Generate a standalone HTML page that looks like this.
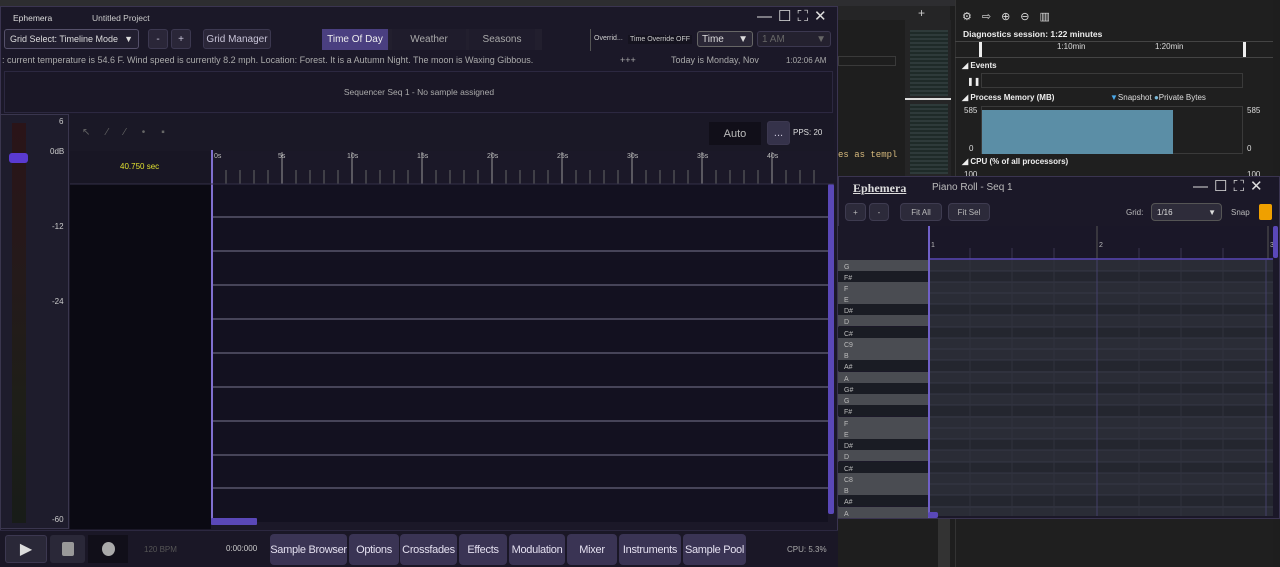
<!DOCTYPE html>
<html><head><style>
*{margin:0;padding:0;box-sizing:border-box}
body{width:1280px;height:567px;overflow:hidden;background:#1e1e1e;font-family:"Liberation Sans",sans-serif;position:relative;color:#bbb}
.a{position:absolute}
.btn{position:absolute;background:#2a2638;border:1px solid #3c3850;border-radius:3px;color:#c8c4d8;font-size:10px;display:flex;align-items:center;justify-content:center}
.tb{position:absolute;top:534px;height:31px;background:#3a3454;border-radius:4px;color:#e4e0f0;font-size:11px;letter-spacing:-0.3px;display:flex;align-items:center;justify-content:center;white-space:nowrap}
.pb{position:absolute;top:203px;height:18px;background:#2c2a3a;border:1px solid #3e3b50;border-radius:4px;color:#bbb;font-size:8px;display:flex;align-items:center;justify-content:center}
</style></head><body>
<div class="a" style="left:0;top:0;width:955px;height:6px;background:#2d2d30"></div>
<div class="a" style="left:838px;top:6px;width:112px;height:14px;background:#252526"></div>
<div class="a" style="left:838px;top:56px;width:58px;height:10px;border:1px solid #3a3a3a"></div>
<div class="a" style="left:838px;top:150px;font:9px 'Liberation Mono',monospace;color:#d7ba7d;white-space:nowrap">es as templ</div>
<div class="a" style="left:905px;top:20px;width:46px;height:156px;background:#252526"></div>
<div class="a" style="left:910px;top:30px;width:38px;height:66px;background:repeating-linear-gradient(#2e3a3a 0 2px,#1e2a28 2px 4px)"></div>
<div class="a" style="left:905px;top:98px;width:46px;height:2px;background:#ddd"></div>
<div class="a" style="left:910px;top:104px;width:38px;height:70px;background:repeating-linear-gradient(#2e3a3a 0 2px,#1e2a28 2px 4px)"></div>
<div class="a" style="left:918px;top:6px;color:#ccc;font-size:12px">+</div>
<!-- diag tools -->
<div class="a" style="left:955px;top:0;width:318px;height:567px;background:#1f1f1f;border-left:1px solid #333"></div>
<div class="a" style="left:962px;top:10px;color:#ddd;font-size:11px;letter-spacing:10px">⚙⇨⊕⊖▥</div>
<div class="a" style="left:963px;top:29px;color:#eee;font-size:8.5px;font-weight:bold">Diagnostics session: 1:22 minutes</div>
<div class="a" style="left:955px;top:41px;width:318px;height:17px;border-top:1px solid #444;border-bottom:1px solid #444"></div>
<div class="a" style="left:979px;top:42px;width:3px;height:15px;background:#eee"></div>
<div class="a" style="left:1243px;top:42px;width:3px;height:15px;background:#eee"></div>
<div class="a" style="left:1057px;top:42px;color:#ddd;font-size:8px">1:10min</div>
<div class="a" style="left:1155px;top:42px;color:#ddd;font-size:8px">1:20min</div>
<div class="a" style="left:962px;top:61px;color:#eee;font-size:8px;font-weight:bold">◢ Events</div>
<div class="a" style="left:967px;top:77px;color:#eee;font-size:8px">❚❚</div>
<div class="a" style="left:981px;top:73px;width:262px;height:15px;border:1px solid #3a3a3a"></div>
<div class="a" style="left:962px;top:93px;color:#eee;font-size:8px;font-weight:bold">◢ Process Memory (MB)</div>
<div class="a" style="left:1110px;top:93px;color:#ddd;font-size:8px"><span style="color:#4aa8e8">▼</span>Snapshot <span style="color:#7ab8d8">●</span>Private Bytes</div>
<div class="a" style="left:981px;top:106px;width:262px;height:48px;border:1px solid #3a3a3a"></div>
<div class="a" style="left:982px;top:110px;width:191px;height:44px;background:#5b8ea6"></div>
<div class="a" style="left:964px;top:106px;color:#ddd;font-size:8px">585</div>
<div class="a" style="left:969px;top:144px;color:#ddd;font-size:8px">0</div>
<div class="a" style="left:1247px;top:106px;color:#ddd;font-size:8px">585</div>
<div class="a" style="left:1247px;top:144px;color:#ddd;font-size:8px">0</div>
<div class="a" style="left:962px;top:157px;color:#eee;font-size:8px;font-weight:bold">◢ CPU (% of all processors)</div>
<div class="a" style="left:964px;top:170px;color:#ddd;font-size:8px">100</div>
<div class="a" style="left:1247px;top:170px;color:#ddd;font-size:8px">100</div>
<div class="a" style="left:938px;top:518px;width:12px;height:49px;background:#333"></div>

<!-- MAIN WINDOW -->
<div class="a" style="left:0;top:6px;width:838px;height:561px;background:#1b1828;border:1px solid #3a3450"></div>
<div class="a" style="left:13px;top:13px;font-size:8.5px;color:#ddd">Ephemera</div>
<div class="a" style="left:92px;top:13px;font-size:8.5px;color:#ccc">Untitled Project</div>
<div class="a" style="left:757px;top:7px;font-size:15px;color:#ddd;letter-spacing:6px">—☐⛶✕</div>
<div class="btn" style="left:4px;top:29px;width:135px;height:20px;justify-content:space-between;padding:0 5px;font-size:9px;color:#ddd;background:#221f30;border-color:#55506a"><span>Grid Select: Timeline Mode</span><span>▼</span></div>
<div class="btn" style="left:148px;top:29px;width:20px;height:20px">-</div>
<div class="btn" style="left:171px;top:29px;width:20px;height:20px">+</div>
<div class="btn" style="left:203px;top:29px;width:68px;height:20px">Grid Manager</div>
<div class="a" style="left:322px;top:29px;width:220px;height:21px;background:#221f2e"></div>
<div class="a" style="left:322px;top:29px;width:66px;height:21px;background:#4a3f80;color:#eee;font-size:10px;display:flex;align-items:center;justify-content:center">Time Of Day</div>
<div class="a" style="left:392px;top:29px;width:74px;height:21px;color:#aaa;font-size:10px;display:flex;align-items:center;justify-content:center;background:#1f1c2c">Weather</div>
<div class="a" style="left:469px;top:29px;width:66px;height:21px;color:#aaa;font-size:10px;display:flex;align-items:center;justify-content:center;background:#1f1c2c">Seasons</div>
<div class="a" style="left:590px;top:29px;width:1px;height:22px;background:#555"></div>
<div class="a" style="left:594px;top:35px;font-size:7px;color:#ccc">Overrid...</div>
<div class="a" style="left:628px;top:35px;font-size:7px;color:#ccc;background:#15131f;padding:1px 2px">Time Override OFF</div>
<div class="btn" style="left:697px;top:31px;width:56px;height:16px;justify-content:space-between;padding:0 4px;color:#ddd;background:#2a2736;border-color:#666"><span>Time</span><span>▼</span></div>
<div class="btn" style="left:757px;top:31px;width:74px;height:16px;justify-content:space-between;padding:0 4px;color:#666;background:#24212f"><span>1 AM</span><span>▼</span></div>
<div class="a" style="left:2px;top:55px;font-size:9px;color:#aaa;white-space:nowrap">: current temperature is 54.6 F. Wind speed is currently 8.2 mph. Location: Forest. It is a Autumn Night. The moon is Waxing Gibbous.</div>
<div class="a" style="left:620px;top:55px;font-size:9px;color:#aaa">+++</div>
<div class="a" style="left:671px;top:55px;font-size:9px;color:#aaa">Today is Monday, Nov</div>
<div class="a" style="left:786px;top:56px;font-size:8px;color:#aaa">1:02:06 AM</div>
<div class="a" style="left:4px;top:71px;width:829px;height:42px;background:#1a1726;border:1px solid #2c2840"></div>
<div class="a" style="left:0;top:87px;width:838px;text-align:center;font-size:8.5px;color:#aaa">Sequencer Seq 1 - No sample assigned</div>
<div class="a" style="left:0;top:114px;width:69px;height:415px;background:#1e1c2c;border:1px solid #3a364e"></div>
<div class="a" style="left:12px;top:123px;width:14px;height:400px;background:linear-gradient(#2a1418,#241a1a 40%,#1e1e18 70%,#181c18)"></div>
<div class="a" style="left:9px;top:153px;width:19px;height:10px;background:#5a3ad0;border-radius:3px"></div>
<div class="a" style="left:59px;top:117px;font-size:8px;color:#ccc">6</div>
<div class="a" style="left:50px;top:147px;font-size:8px;color:#ccc">0dB</div>
<div class="a" style="left:52px;top:222px;font-size:8px;color:#ccc">-12</div>
<div class="a" style="left:52px;top:297px;font-size:8px;color:#ccc">-24</div>
<div class="a" style="left:52px;top:515px;font-size:8px;color:#ccc">-60</div>
<div class="a" style="left:70px;top:114px;width:764px;height:37px;background:#1a1826"></div>
<div class="a" style="left:82px;top:127px;font-size:10px;color:#666;letter-spacing:16px">↖⁄⁄•▪</div>
<div class="a" style="left:709px;top:122px;width:52px;height:23px;background:#110f19;color:#bbb;font-size:11px;display:flex;align-items:center;justify-content:center">Auto</div>
<div class="btn" style="left:767px;top:121px;width:23px;height:24px;background:#35324a;font-size:11px">...</div>
<div class="a" style="left:793px;top:128px;font-size:8px;color:#ddd">PPS: 20</div>
<div class="a" style="left:70px;top:151px;width:142px;height:33px;background:#181624"></div>
<div class="a" style="left:120px;top:162px;font-size:8px;color:#e0e030">40.750 sec</div>
<div class="a" style="left:70px;top:184px;width:141px;height:345px;background:#0b0a13"></div>
<div class="a" style="left:212px;top:184px;width:616px;height:338px;background:#131120"></div>
<svg class="a" style="left:0;top:0" width="838" height="567">
<g stroke="#666" stroke-width="1">
<path d="M226 170V184M240 170V184M254 170V184M268 170V184M296 170V184M310 170V184M324 170V184M338 170V184M366 170V184M380 170V184M394 170V184M408 170V184M436 170V184M450 170V184M464 170V184M478 170V184M506 170V184M520 170V184M534 170V184M548 170V184M576 170V184M590 170V184M604 170V184M618 170V184M646 170V184M660 170V184M674 170V184M688 170V184M716 170V184M730 170V184M744 170V184M758 170V184M786 170V184M800 170V184M814 170V184"/>
</g>
<g stroke="#999"><path d="M282 152V184M352 152V184M422 152V184M492 152V184M562 152V184M632 152V184M702 152V184M772 152V184"/></g>
<g fill="#bbb" font-size="7" font-family="Liberation Sans"><text x="214" y="158">0s</text><text x="278" y="158">5s</text><text x="347" y="158">10s</text><text x="417" y="158">15s</text><text x="487" y="158">20s</text><text x="557" y="158">25s</text><text x="627" y="158">30s</text><text x="697" y="158">35s</text><text x="767" y="158">40s</text></g>
<g stroke="#7a7690"><path d="M212 217H828M212 251H828M212 285H828M212 319H828M212 353H828M212 387H828M212 421H828M212 455H828M212 488H828"/></g>
<path d="M212 150V524" stroke="#8070d0" stroke-width="2"/>
<rect x="211" y="518" width="46" height="7" rx="1" fill="#5a48b8"/>
<rect x="828" y="184" width="6" height="330" rx="2" fill="#5a48b8"/>
<path d="M70 184H834" stroke="#333048"/>
</svg>
<div class="a" style="left:0;top:530px;width:838px;height:37px;background:#1a1726;border-top:1px solid #2c2840"></div>
<div class="btn" style="left:5px;top:535px;width:42px;height:28px;background:#2a2838;font-size:16px;color:#ddd">▶</div>
<div class="btn" style="left:50px;top:535px;width:35px;height:28px;background:#2a2838;border:none"><div style="width:12px;height:14px;background:#999;border-radius:2px"></div></div>
<div class="a" style="left:88px;top:535px;width:40px;height:28px;background:#110f19;display:flex;align-items:center;justify-content:center"><div style="width:13px;height:14px;border-radius:50%;background:#aaa"></div></div>
<div class="a" style="left:144px;top:545px;font-size:8px;color:#555">120 BPM</div>
<div class="a" style="left:226px;top:544px;font-size:8px;color:#ccc">0:00:000</div>
<div class="tb" style="left:270px;width:77px">Sample Browser</div>
<div class="tb" style="left:349px;width:50px">Options</div>
<div class="tb" style="left:400px;width:57px">Crossfades</div>
<div class="tb" style="left:459px;width:48px">Effects</div>
<div class="tb" style="left:509px;width:56px">Modulation</div>
<div class="tb" style="left:567px;width:50px">Mixer</div>
<div class="tb" style="left:619px;width:62px">Instruments</div>
<div class="tb" style="left:683px;width:63px">Sample Pool</div>
<div class="a" style="left:787px;top:545px;font-size:8px;color:#aaa">CPU: 5.3%</div>

<!-- PIANO ROLL -->
<div class="a" style="left:838px;top:176px;width:442px;height:343px;background:#1b1828;border:1px solid #3a3450"></div>
<div class="a" style="left:853px;top:181px;font:bold 12px 'Liberation Serif',serif;color:#ddd;text-decoration:underline">Ephemera</div>
<div class="a" style="left:932px;top:182px;font-size:10px;color:#bbb">Piano Roll - Seq 1</div>
<div class="a" style="left:1193px;top:177px;font-size:15px;color:#ddd;letter-spacing:6px">—☐⛶✕</div>
<div class="pb" style="left:845px;width:21px">+</div>
<div class="pb" style="left:869px;width:20px">-</div>
<div class="pb" style="left:900px;width:42px">Fit All</div>
<div class="pb" style="left:948px;width:42px">Fit Sel</div>
<div class="a" style="left:1126px;top:208px;font-size:8px;color:#bbb">Grid:</div>
<div class="pb" style="left:1151px;width:71px;justify-content:space-between;padding:0 5px;color:#ddd;background:#2e2c3a;border-color:#555"><span>1/16</span><span>▼</span></div>
<div class="a" style="left:1231px;top:208px;font-size:8px;color:#bbb">Snap</div>
<div class="a" style="left:1259px;top:204px;width:13px;height:16px;background:#f0a000;border-radius:2px"></div>
<div class="a" style="left:838px;top:226px;width:90px;height:34px;background:#1b1828"></div>
<div class="a" style="left:928px;top:226px;width:347px;height:34px;background:#1a1728"></div>
<svg class="a" style="left:838px;top:226px" width="442" height="293">
<g stroke="#3a3650">
<path d="M132 22V33M174 22V33M216 22V33M301 22V33M343 22V33M385 22V33"/>
</g>
<path d="M259 0V33M430 0V33" stroke="#555"/>
<text x="93" y="21" fill="#bbb" font-size="7" font-family="Liberation Sans">1</text>
<text x="261" y="21" fill="#bbb" font-size="7" font-family="Liberation Sans">2</text>
<text x="432" y="21" fill="#bbb" font-size="7" font-family="Liberation Sans">3</text>
<g font-size="7" font-family="Liberation Sans" fill="#bbb">
<rect x="0" y="34" width="90" height="11" fill="#4a4c52"/><text x="6" y="43">G</text>
<rect x="0" y="45" width="90" height="11" fill="#1a1c24"/><text x="6" y="54">F#</text>
<rect x="0" y="56" width="90" height="11" fill="#4a4c52"/><text x="6" y="65">F</text>
<rect x="0" y="67" width="90" height="11" fill="#4a4c52"/><text x="6" y="76">E</text>
<rect x="0" y="78" width="90" height="11" fill="#1a1c24"/><text x="6" y="87">D#</text>
<rect x="0" y="89" width="90" height="11" fill="#4a4c52"/><text x="6" y="98">D</text>
<rect x="0" y="101" width="90" height="11" fill="#1a1c24"/><text x="6" y="110">C#</text>
<rect x="0" y="112" width="90" height="11" fill="#4a4c52"/><text x="6" y="121">C9</text>
<rect x="0" y="123" width="90" height="11" fill="#4a4c52"/><text x="6" y="132">B</text>
<rect x="0" y="134" width="90" height="11" fill="#1a1c24"/><text x="6" y="143">A#</text>
<rect x="0" y="146" width="90" height="11" fill="#4a4c52"/><text x="6" y="155">A</text>
<rect x="0" y="157" width="90" height="11" fill="#1a1c24"/><text x="6" y="166">G#</text>
<rect x="0" y="168" width="90" height="11" fill="#4a4c52"/><text x="6" y="177">G</text>
<rect x="0" y="179" width="90" height="11" fill="#1a1c24"/><text x="6" y="188">F#</text>
<rect x="0" y="191" width="90" height="11" fill="#4a4c52"/><text x="6" y="200">F</text>
<rect x="0" y="202" width="90" height="11" fill="#4a4c52"/><text x="6" y="211">E</text>
<rect x="0" y="213" width="90" height="11" fill="#1a1c24"/><text x="6" y="222">D#</text>
<rect x="0" y="224" width="90" height="11" fill="#4a4c52"/><text x="6" y="233">D</text>
<rect x="0" y="236" width="90" height="11" fill="#1a1c24"/><text x="6" y="245">C#</text>
<rect x="0" y="247" width="90" height="11" fill="#4a4c52"/><text x="6" y="256">C8</text>
<rect x="0" y="258" width="90" height="11" fill="#4a4c52"/><text x="6" y="267">B</text>
<rect x="0" y="269" width="90" height="11" fill="#1a1c24"/><text x="6" y="278">A#</text>
<rect x="0" y="281" width="90" height="11" fill="#4a4c52"/><text x="6" y="290">A</text>
</g>
<rect x="91" y="34" width="344" height="256" fill="#2a2c36"/>
<g fill="#24262f">
<rect x="91" y="45" width="344" height="11"/><rect x="91" y="78" width="344" height="11"/><rect x="91" y="101" width="344" height="11"/><rect x="91" y="134" width="344" height="11"/><rect x="91" y="157" width="344" height="11"/><rect x="91" y="179" width="344" height="11"/><rect x="91" y="213" width="344" height="11"/><rect x="91" y="236" width="344" height="11"/><rect x="91" y="269" width="344" height="11"/>
</g>
<g stroke="#353746">
<path d="M91 45H435M91 56H435M91 67H435M91 78H435M91 89H435M91 101H435M91 112H435M91 123H435M91 134H435M91 146H435M91 157H435M91 168H435M91 179H435M91 191H435M91 202H435M91 213H435M91 224H435M91 236H435M91 247H435M91 258H435M91 269H435M91 281H435"/>
</g>
<g stroke="#30323e"><path d="M132 34V290M174 34V290M216 34V290M301 34V290M343 34V290M385 34V290"/></g>
<path d="M259 34V290M428 34V290" stroke="#44406a"/>
<path d="M91 33H435" stroke="#5a48b8" stroke-width="1.5"/>
<path d="M91 0V292" stroke="#7060c8" stroke-width="2"/>
<rect x="90" y="286" width="10" height="6" rx="2" fill="#5a48b8"/>
<rect x="435" y="0" width="5" height="32" rx="2" fill="#5a48b8"/>
</svg>
</body></html>
